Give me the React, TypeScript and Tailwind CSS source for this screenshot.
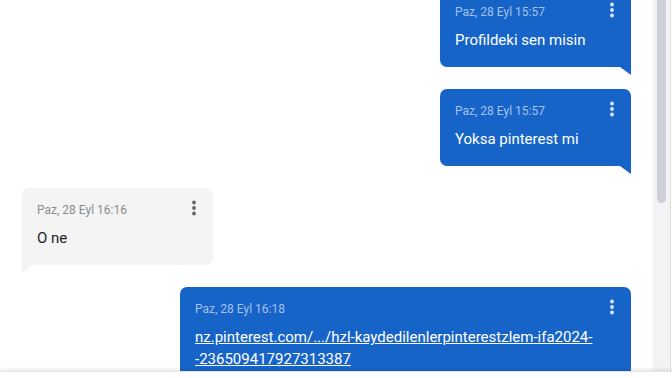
import React from "react";

function Kebab({ color }: { color: string }) {
  return (
    <svg width="6" height="16" viewBox="0 0 6 16" className="absolute right-[16px] top-[12px]">
      <circle cx="3" cy="2.5" r="1.9" fill={color} />
      <circle cx="3" cy="8" r="1.9" fill={color} />
      <circle cx="3" cy="13.5" r="1.9" fill={color} />
    </svg>
  );
}

function Outgoing({ time, children, wide }: { time: string; children: React.ReactNode; wide?: boolean }) {
  return (
    <div className="flex justify-end">
      <div
        className={`relative bg-[#1764c8] rounded-t-[7px] rounded-bl-[7px] pl-[15px] pt-[14px] pb-[16px] ${
          wide ? "w-[451px] pr-[20px]" : "w-[191px] pr-[40px]"
        }`}
      >
        <div className="text-[12px] leading-[16px] text-[#a5c1ec]">{time}</div>
        <div className="mt-[9px] text-[15px] leading-[22px] text-white">{children}</div>
        <Kebab color="#dbe7fa" />
        <svg width="11" height="8" viewBox="0 0 11 8" className="absolute right-0 top-full">
          <polygon points="0,0 11,0 11,8" fill="#1764c8" />
        </svg>
      </div>
    </div>
  );
}

function Incoming({ time, children }: { time: string; children: React.ReactNode }) {
  return (
    <div className="flex justify-start">
      <div className="relative w-[191px] bg-[#f4f4f4] rounded-t-[7px] rounded-br-[7px] pl-[15px] pr-[40px] pt-[14px] pb-[16px]">
        <div className="text-[12px] leading-[16px] text-[#8c8c8c]">{time}</div>
        <div className="mt-[9px] text-[15px] leading-[22px] text-[#222]">{children}</div>
        <Kebab color="#666" />
        <svg width="11" height="8" viewBox="0 0 11 8" className="absolute left-0 top-full">
          <polygon points="0,0 11,0 0,8" fill="#f4f4f4" />
        </svg>
      </div>
    </div>
  );
}

export default function App() {
  return (
    <div
      className="w-[672px] h-[378px] flex flex-col bg-white overflow-hidden"
      style={{ fontFamily: "Roboto, 'Noto Sans', sans-serif" }}
    >
      <div className="flex flex-1 min-h-0">
        <div className="flex-1 overflow-hidden px-[22px]">
          <div className="flex flex-col gap-[22px] -mt-[10px]">
            <Outgoing time="Paz, 28 Eyl 15:57">Profildeki sen misin</Outgoing>
            <Outgoing time="Paz, 28 Eyl 15:57">Yoksa pinterest mi</Outgoing>
            <Incoming time="Paz, 28 Eyl 16:16">O ne</Incoming>
            <Outgoing time="Paz, 28 Eyl 16:18" wide>
              <span className="underline whitespace-nowrap">
                nz.pinterest.com/.../hzl-kaydedilenlerpinterestzlem-ifa2024-
              </span>
              <br />
              <span className="underline whitespace-nowrap">-236509417927313387</span>
            </Outgoing>
          </div>
        </div>
        <div className="w-[17px] bg-[#f3f3f5] flex justify-center">
          <div className="w-[9px] h-[203px] bg-[#cdd0d8] rounded-b-[5px]" />
        </div>
        <div className="w-[2px] border-l border-[#dcdcdc] bg-white" />
      </div>
      <div className="h-[7px] bg-white shadow-[0_-2px_3px_rgba(0,0,0,0.08)] border-t border-[#e6e6e6] relative z-10" />
    </div>
  );
}
